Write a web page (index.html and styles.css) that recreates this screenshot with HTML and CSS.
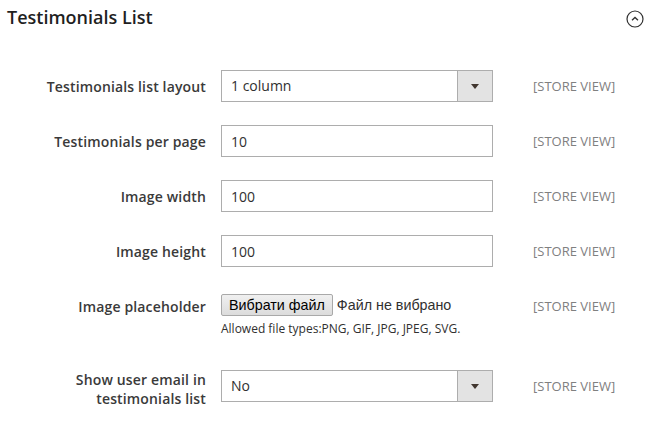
FILE: index.html
```html
<!DOCTYPE html>
<html>
<head>
<meta charset="utf-8">
<link rel="stylesheet" href="styles.css">
</head>
<body>
<div class="section">
  <div class="section-head">
    <h2 class="section-title">Testimonials List</h2>
    <span class="toggle">
      <svg width="18" height="18" viewBox="0 0 18 18"><circle cx="9" cy="9" r="8" fill="none" stroke="#303030" stroke-width="1.2"/><path d="M6 10.2 L9 7.4 L12 10.2" fill="none" stroke="#303030" stroke-width="1.3"/></svg>
    </span>
  </div>
  <div class="form">
    <div class="row">
      <label class="label">Testimonials list layout</label>
      <div class="control">
        <div class="select"><span class="select-value">1 column</span><span class="select-btn"><span class="arrow"></span></span></div>
      </div>
      <div class="scope">[STORE VIEW]</div>
    </div>
    <div class="row">
      <label class="label">Testimonials per page</label>
      <div class="control"><input class="input" type="text" value="10"></div>
      <div class="scope">[STORE VIEW]</div>
    </div>
    <div class="row">
      <label class="label">Image width</label>
      <div class="control"><input class="input" type="text" value="100"></div>
      <div class="scope">[STORE VIEW]</div>
    </div>
    <div class="row">
      <label class="label">Image height</label>
      <div class="control"><input class="input" type="text" value="100"></div>
      <div class="scope">[STORE VIEW]</div>
    </div>
    <div class="row row-file">
      <label class="label">Image placeholder</label>
      <div class="control control-file">
        <div class="file"><button class="file-btn" type="button">Вибрати файл</button><span class="file-name">Файл не вибрано</span></div>
        <div class="note">Allowed file types:PNG, GIF, JPG, JPEG, SVG.</div>
      </div>
      <div class="scope">[STORE VIEW]</div>
    </div>
    <div class="row">
      <label class="label label-multi">Show user email in testimonials list</label>
      <div class="control">
        <div class="select"><span class="select-value">No</span><span class="select-btn"><span class="arrow"></span></span></div>
      </div>
      <div class="scope">[STORE VIEW]</div>
    </div>
  </div>
</div>
</body>
</html>
```
FILE: styles.css
```css
* { box-sizing: border-box; }
html, body { margin: 0; padding: 0; background: #fff; }
body {
  font-family: "Open Sans", "Noto Sans", sans-serif;
  color: #303030;
  font-size: 14px;
}
.section-head {
  display: flex;
  justify-content: space-between;
  align-items: flex-start;
  padding: 5px 16px 0 7px;
}
.section-title {
  margin: 0;
  font-size: 18px;
  font-weight: 600;
  line-height: 25px;
  color: #1f1f1f;
}
.toggle { display: block; margin-top: 5px; line-height: 0; }
.form { padding-top: 40px; }
.row {
  display: grid;
  grid-template-columns: 206px 272px 1fr;
  column-gap: 15px;
  align-items: start;
  margin-bottom: 23px;
}
.label {
  min-height: 32px;
  display: flex;
  align-items: center;
  justify-content: flex-end;
  text-align: right;
  font-weight: 600;
  font-size: 14px;
  letter-spacing: 0.15px;
  line-height: 19px;
  color: #3a3a3a;
}
.label-multi { padding-left: 60px; }
.control { min-height: 32px; }
.select {
  display: flex;
  height: 32px;
  border: 1px solid #adadad;
  background: #fff;
}
.select-value {
  flex: 1;
  padding-left: 9px;
  line-height: 30px;
  font-size: 14px;
}
.select-btn {
  width: 35px;
  border-left: 1px solid #adadad;
  background: #e3e3e3;
  display: flex;
  align-items: center;
  justify-content: center;
}
.arrow {
  width: 0; height: 0;
  border-left: 4px solid transparent;
  border-right: 4px solid transparent;
  border-top: 5px solid #41362f;
}
.input {
  display: block;
  width: 272px;
  height: 32px;
  border: 1px solid #adadad;
  padding: 0 9px;
  font-family: "Open Sans", "Noto Sans", sans-serif;
  font-size: 14px;
  color: #303030;
  outline: none;
}
.control-file { padding-top: 4px; padding-bottom: 10px; }
.file { display: flex; align-items: center; height: 22px; }
.file-btn {
  height: 22px;
  padding: 0 7px;
  border: 1px solid #a9a9a9;
  border-radius: 2px;
  background: linear-gradient(#f0f0f0, #dcdcdc);
  font-family: "Liberation Sans", Arial, sans-serif;
  font-size: 14.3px;
  color: #000;
}
.file-name {
  margin-left: 4px;
  font-family: "Liberation Sans", Arial, sans-serif;
  font-size: 14.3px;
  color: #303030;
}
.note {
  margin-top: 4px;
  font-size: 12px;
  line-height: 17px;
  color: #303030;
}
.scope {
  padding-left: 25px;
  min-height: 32px;
  display: flex;
  align-items: center;
  font-size: 13px;
  color: #808080;
}
```
